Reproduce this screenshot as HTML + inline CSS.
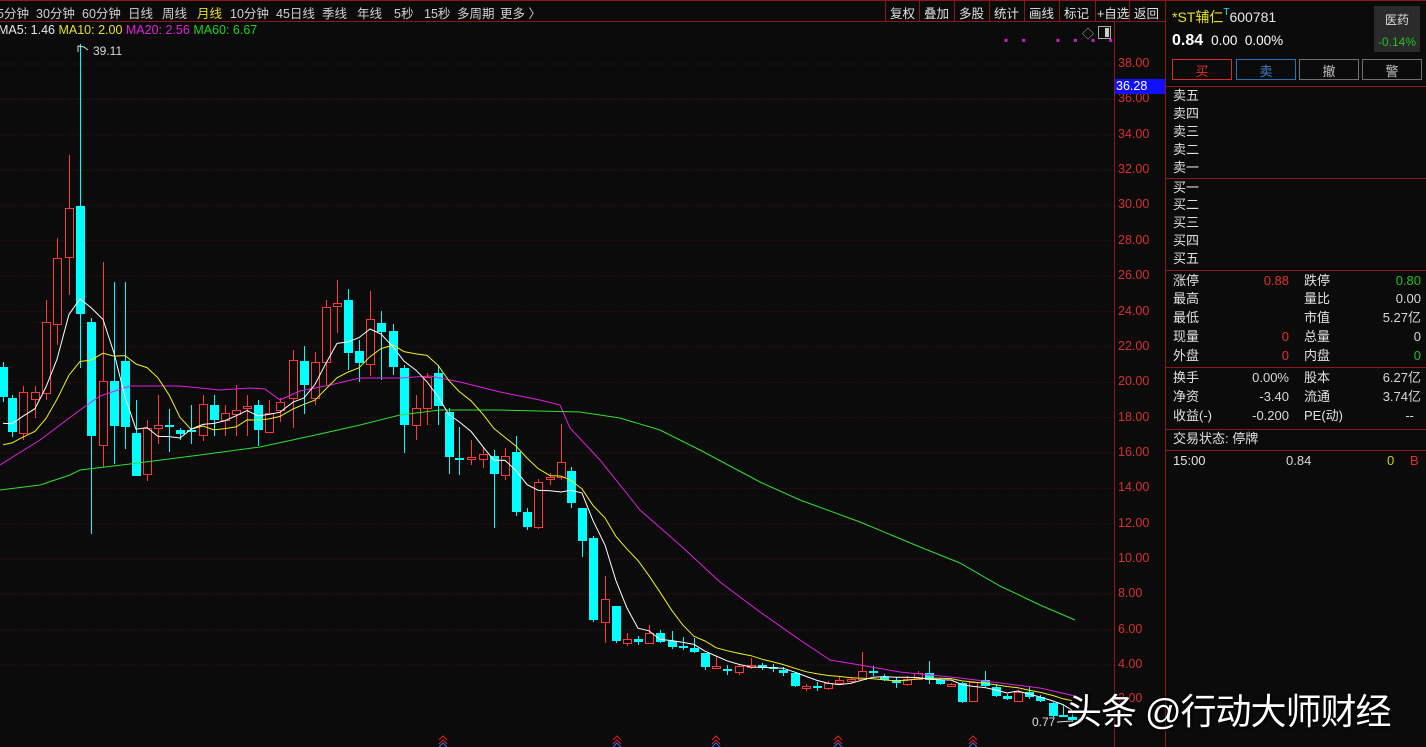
<!DOCTYPE html>
<html><head><meta charset="utf-8">
<style>
*{margin:0;padding:0;box-sizing:border-box}
body{width:1426px;height:747px;background:#0b0b0b;overflow:hidden;position:relative;font-family:"Liberation Sans","Noto Sans CJK SC",sans-serif;color:#d8d8d8;font-size:12px}
.a{position:absolute;white-space:nowrap}
.tb span{position:absolute;top:3px;font-size:12.5px;color:#d0d0d0}
.btn{position:absolute;top:0;height:21px;border-left:1px solid #8a1a1a;font-size:12.5px;color:#e0e0e0;padding:3px 0 0 4px}
.row{position:absolute;left:1173px;font-size:13px;color:#e0e0e0;line-height:18px}
.v{position:absolute;font-size:13px;text-align:right;line-height:18px}
.hl{position:absolute;left:1166px;width:260px;height:1px;background:#8a1a1a}
.ax{position:absolute;left:1118px;font-size:12.5px;color:#d83030}
</style></head><body>
<div class="tb">
<span style="left:-3px">5分钟</span><span style="left:36px">30分钟</span><span style="left:82px">60分钟</span><span style="left:128px">日线</span><span style="left:162px">周线</span><span style="left:197px;color:#e8e020">月线</span><span style="left:230px">10分钟</span><span style="left:276px">45日线</span><span style="left:322px">季线</span><span style="left:357px">年线</span><span style="left:394px">5秒</span><span style="left:424px">15秒</span><span style="left:457px">多周期</span><span style="left:500px">更多 〉</span>
</div>
<div class="a" style="left:0;top:0;width:1426px;height:1px;background:#8a1a1a"></div>
<div class="a" style="left:0;top:21px;width:1165px;height:1px;background:#8a1a1a"></div>
<div class="btn" style="left:885px">复权</div><div class="btn" style="left:919px">叠加</div><div class="btn" style="left:954px">多股</div><div class="btn" style="left:989px">统计</div><div class="btn" style="left:1024px">画线</div><div class="btn" style="left:1059px">标记</div><div class="btn" style="left:1095px;padding-left:1px">+自选</div><div class="btn" style="left:1129px;width:36px">返回</div>
<div class="a" style="left:-2px;top:23px;font-size:12.5px"><span style="color:#e8e8e8">MA5: 1.46</span> <span style="color:#e8e020">MA10: 2.00</span> <span style="color:#e020e0">MA20: 2.56</span> <span style="color:#20d020">MA60: 6.67</span></div>
<div class="a" style="left:93px;top:44px;font-size:12px;color:#d8d8d8">39.11</div>
<div class="a" style="left:1004px;top:33px;color:#d020d0;font-size:12px;letter-spacing:5px;font-weight:bold">▪ ▪&nbsp;&nbsp;&nbsp;▪ ▪ ▪ ▪</div>
<div class="a" style="left:1082px;top:25px;color:#aaa;font-size:12px">◇</div>
<div class="a" style="left:1098px;top:26px;width:13px;height:13px;border:1px solid #aaa"><div style="position:absolute;right:1px;top:1px;width:4px;height:9px;background:#ccc"></div></div>
<svg id="ch" class="a" style="left:0;top:0" width="1114" height="747"></svg>
<div class="a" style="left:1114px;top:22px;width:1px;height:725px;background:#8a1a1a"></div>
<div class="a" style="left:1165px;top:0;width:1px;height:747px;background:#8a1a1a"></div>
<div id="axis"></div>
<div class="a" style="left:1115px;top:79px;width:50px;height:15px;background:#1010ff;color:#fff;font-size:12.5px;padding-left:1px">36.28</div>
<div class="a" style="left:1172px;top:7px;font-size:14px;color:#e8e020">*ST辅仁<span style="color:#20e0e0;font-size:10px;vertical-align:top">T</span><span style="color:#e8e8e8">600781</span></div>
<div class="a" style="left:1374px;top:6px;width:46px;height:46px;background:#2b2b2b;text-align:center;font-size:12px;color:#e0e0e0;padding-top:5px">医药<div style="color:#20c020;margin-top:7px">-0.14%</div></div>
<div class="a" style="left:1172px;top:32px;font-size:15px;color:#fff"><b style="font-size:16px">0.84</b> <span style="font-size:13.5px">&nbsp;0.00&nbsp; 0.00%</span></div>
<div class="a" style="left:1172px;top:59px;width:60px;height:21px;border:1px solid #d03030;color:#e03030;text-align:center;font-size:13px;padding-top:1px">买</div>
<div class="a" style="left:1236px;top:59px;width:60px;height:21px;border:1px solid #3070b0;color:#4080d0;text-align:center;font-size:13px;padding-top:1px">卖</div>
<div class="a" style="left:1299px;top:59px;width:60px;height:21px;border:1px solid #707070;color:#c0c0c0;text-align:center;font-size:13px;padding-top:1px">撤</div>
<div class="a" style="left:1362px;top:59px;width:60px;height:21px;border:1px solid #707070;color:#c0c0c0;text-align:center;font-size:13px;padding-top:1px">警</div>
<div class="hl" style="top:86px"></div>
<div class="row" style="top:87px">卖五</div><div class="row" style="top:105px">卖四</div><div class="row" style="top:123px">卖三</div><div class="row" style="top:141px">卖二</div><div class="row" style="top:159px">卖一</div>
<div class="hl" style="top:178px"></div>
<div class="row" style="top:179px">买一</div><div class="row" style="top:196px">买二</div><div class="row" style="top:214px">买三</div><div class="row" style="top:232px">买四</div><div class="row" style="top:250px">买五</div>
<div class="hl" style="top:270px"></div>
<div class="row" style="top:272px">涨停</div><div class="row" style="top:290px">最高</div><div class="row" style="top:309px">最低</div><div class="row" style="top:328px">现量</div><div class="row" style="top:347px">外盘</div>
<div class="row" style="left:1304px;top:272px">跌停</div><div class="row" style="left:1304px;top:290px">量比</div><div class="row" style="left:1304px;top:309px">市值</div><div class="row" style="left:1304px;top:328px">总量</div><div class="row" style="left:1304px;top:347px">内盘</div>
<div class="v" style="right:137px;top:272px;color:#e03030">0.88</div><div class="v" style="right:137px;top:328px;color:#e03030">0</div><div class="v" style="right:137px;top:347px;color:#e03030">0</div>
<div class="v" style="right:5px;top:272px;color:#20c020">0.80</div><div class="v" style="right:5px;top:290px">0.00</div><div class="v" style="right:5px;top:309px">5.27亿</div><div class="v" style="right:5px;top:328px">0</div><div class="v" style="right:5px;top:347px;color:#20c020">0</div>
<div class="hl" style="top:367px"></div>
<div class="row" style="top:369px">换手</div><div class="row" style="top:388px">净资</div><div class="row" style="top:407px">收益(-)</div>
<div class="row" style="left:1304px;top:369px">股本</div><div class="row" style="left:1304px;top:388px">流通</div><div class="row" style="left:1304px;top:407px">PE(动)</div>
<div class="v" style="right:137px;top:369px">0.00%</div><div class="v" style="right:137px;top:388px">-3.40</div><div class="v" style="right:137px;top:407px">-0.200</div>
<div class="v" style="right:5px;top:369px">6.27亿</div><div class="v" style="right:5px;top:388px">3.74亿</div><div class="v" style="right:12px;top:407px">--</div>
<div class="hl" style="top:429px"></div>
<div class="row" style="top:430px">交易状态: 停牌</div>
<div class="hl" style="top:450px"></div>
<div class="row" style="top:452px">15:00</div>
<div class="v" style="left:1286px;top:452px">0.84</div>
<div class="v" style="left:1387px;top:452px;color:#d0d020">0</div>
<div class="v" style="left:1410px;top:452px;color:#e03030">B</div>
<div class="a" style="left:1066px;top:683px;font-size:36px;letter-spacing:-1px;color:#fff;text-shadow:0 0 3px #000,1px 1px 2px #000">头条 @行动大师财经</div>
<script>
var svg=document.getElementById('ch'),h='';
function Y(p){return 64+(38-p)*17.68;}
var ax='';
for(var p=4;p<=38;p+=2){var y=Y(p);h+='<line x1="0" y1="'+y.toFixed(1)+'" x2="1114" y2="'+y.toFixed(1)+'" stroke="#4a1212" stroke-dasharray="1,2"/>';
h+='<line x1="1114" y1="'+y.toFixed(1)+'" x2="1119" y2="'+y.toFixed(1)+'" stroke="#8a1a1a"/>';
ax+='<div class="ax" style="top:'+(y-8).toFixed(0)+'px">'+(p<10?' ':'')+p.toFixed(2)+'</div>';}
ax+='<div class="ax" style="top:691px">2.00</div>';
document.getElementById('axis').innerHTML=ax;
var C=[[3,'c',367,397,362,402],[12,'c',398,432,395,437],[23,'r',392,433,386,440],[35,'r',392,399,386,418],[46,'r',322,393,300,400],[57,'r',258,324,238,345],[69,'r',208,257,155,295],[80,'c',206,314,44,368],[91,'c',322,436,318,534],[103,'r',381,445,262,467],[114,'c',381,426,282,464],[125,'c',361,427,282,449],[136,'c',433,476,400,476],[147,'r',428,474,420,481],[158,'r',425,428,395,444],[169,'c',425,427,409,452],[180,'c',430,434,428,440],[191,'c',430,432,405,444],[203,'r',404,435,395,441],[214,'c',405,420,395,436],[225,'r',413,420,405,436],[236,'r',410,414,385,436],[247,'r',406,408,395,436],[258,'c',405,430,400,446],[269,'r',413,432,400,433],[280,'r',402,410,398,422],[293,'r',360,398,350,428],[304,'c',361,385,346,414],[315,'r',362,398,352,405],[326,'r',307,362,300,385],[337,'r',303,306,280,333],[348,'c',300,353,289,370],[359,'c',351,363,340,382],[370,'r',319,364,291,376],[381,'c',323,332,311,380],[393,'c',331,367,324,375],[404,'c',368,425,365,453],[416,'r',408,425,395,440],[427,'r',377,408,373,425],[438,'c',373,406,365,425],[449,'c',412,457,408,474],[459,'c',458,460,427,475],[471,'r',457,459,440,465],[483,'r',454,459,447,468],[494,'c',456,474,450,528],[505,'r',456,475,448,480],[516,'c',452,512,436,516],[527,'c',512,527,508,530],[538,'r',482,527,479,529],[550,'r',477,479,473,485],[561,'r',462,477,424,480],[571,'c',471,503,467,508],[582,'c',508,541,508,557],[593,'c',538,620,536,622],[605,'r',599,622,576,643],[616,'c',606,641,606,643],[627,'r',639,643,633,646],[638,'c',639,642,636,645],[649,'r',633,643,625,644],[660,'c',633,642,630,643],[672,'c',641,647,631,649],[683,'c',646,648,637,650],[694,'c',648,652,638,653],[705,'c',653,667,653,670],[716,'r',666,668,657,668],[727,'c',669,671,665,675],[739,'r',666,672,664,675],[751,'r',665,667,658,669],[762,'c',665,668,663,670],[773,'c',667,669,664,672],[783,'c',670,673,667,676],[795,'c',673,686,672,687],[806,'r',686,688,684,691],[817,'c',686,688,682,691],[828,'r',683,688,681,690],[839,'r',680,683,677,684],[851,'r',679,681,677,683],[862,'r',671,679,652,680],[873,'c',671,673,666,676],[884,'c',677,680,674,681],[896,'c',680,683,677,688],[907,'r',679,684,676,686],[918,'r',673,679,671,680],[929,'c',673,680,661,684],[940,'c',680,684,678,685],[951,'r',684,686,683,687],[962,'c',683,702,682,703],[973,'r',682,701,681,702],[985,'c',680,686,671,687],[996,'c',687,696,684,697],[1007,'c',696,699,694,700],[1018,'r',692,701,690,702],[1029,'c',692,697,687,699],[1040,'c',697,701,695,702],[1053,'c',703,716,702,717],[1063,'c',715,717,705,717],[1072,'c',717,720,713,722]];
var closes=[];
C.forEach(function(c){var x=c[0],w=8;
 if(c[1]=='r'){h+='<line x1="'+(x+.5)+'" y1="'+c[4]+'" x2="'+(x+.5)+'" y2="'+c[2]+'" stroke="#ff3838"/><line x1="'+(x+.5)+'" y1="'+c[3]+'" x2="'+(x+.5)+'" y2="'+c[5]+'" stroke="#ff3838"/>';
  h+='<rect x="'+(x-w/2+.5)+'" y="'+(c[2]+.5)+'" width="'+w+'" height="'+Math.max(1,c[3]-c[2])+'" fill="#0b0b0b" stroke="#ff3838"/>';closes.push(c[2]);}
 else{h+='<line x1="'+(x+.5)+'" y1="'+c[4]+'" x2="'+(x+.5)+'" y2="'+c[5]+'" stroke="#00ffff"/>';
  h+='<rect x="'+(x-w/2)+'" y="'+c[2]+'" width="'+(w+1)+'" height="'+Math.max(2,c[3]-c[2])+'" fill="#00ffff"/>';closes.push(c[3]);}
});
function ma(n,pre){var pts=[];for(var i=0;i<C.length;i++){var s=0;for(var k=0;k<n;k++){var j=i-k;s+=j>=0?closes[j]:pre;}pts.push(C[i][0]+','+(s/n).toFixed(1));}return pts.join(' ');}
function pl(p,c){return '<polyline points="'+p+'" fill="none" stroke="'+c+'" stroke-width="1"/>';}
h+=pl('0,465 40,440 80,410 100,396 130,386 180,386 220,390 250,388 265,389 280,400 300,391 330,385 360,378 400,378 430,376 460,382 500,392 540,400 560,405 570,428 600,460 640,510 680,545 720,582 760,612 800,640 830,660 860,665 900,672 960,678 1000,683 1040,688 1075,696','#e020e0');
h+=pl('0,490 40,485 70,475 80,470 130,464 200,455 260,447 320,434 360,425 400,415 440,410 500,410 580,412 620,418 660,430 700,450 760,482 800,500 860,522 920,547 960,563 1000,586 1040,605 1075,620','#30e030');
h+=pl(ma(10,450),'#f0f020');
h+=pl(ma(5,430),'#ffffff');
h+='<polyline points="78,52 78,46 84,47 88,50" fill="none" stroke="#ddd"/>';
h+='<text x="1032" y="726" fill="#ddd" font-size="12" font-family="Liberation Sans">0.77</text><line x1="1057" y1="722" x2="1072" y2="721" stroke="#ddd"/>';
[443,617,716,838,973].forEach(function(x){h+='<path d="M'+(x-4)+' 740 L'+x+' 736 L'+(x+4)+' 740 M'+(x-4)+' 744 L'+x+' 740 L'+(x+4)+' 744" stroke="#e02020" fill="none"/><path d="M'+(x-4)+' 747 L'+x+' 743 L'+(x+4)+' 747" stroke="#3070ff" fill="none"/>';});
svg.innerHTML=h;
</script>
</body></html>
